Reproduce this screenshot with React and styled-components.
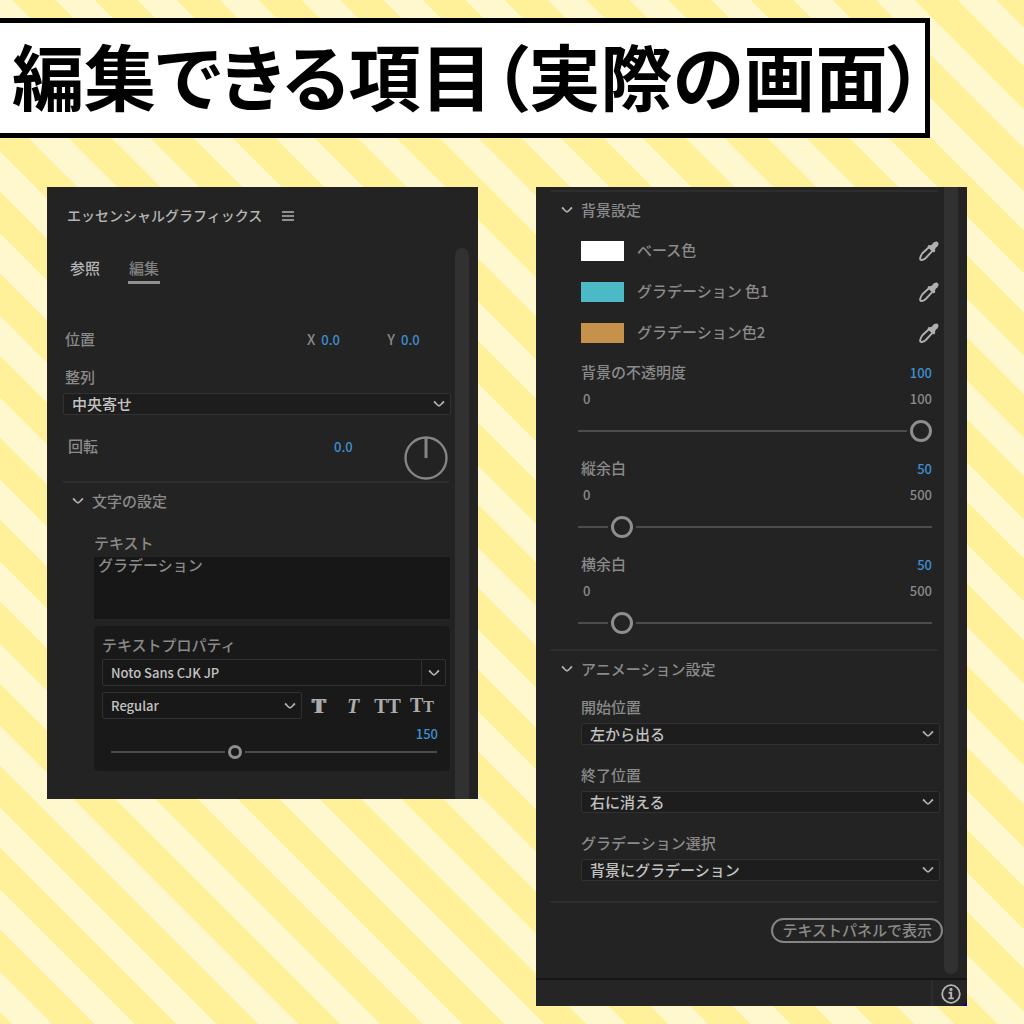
import React, { useState } from 'react'
import styled, { createGlobalStyle } from 'styled-components';

const GlobalStyle = createGlobalStyle`
  * {
    box-sizing: border-box;
  }
  body {
    margin: 0;
    font-family: "Noto Sans CJK JP", "Noto Sans", sans-serif;
    font-size: 15px;
    font-weight: 500;
    line-height: 20px;
  }
  button, input, select, textarea {
    margin: 0;
    padding: 0;
    border: none;
    border-radius: 0;
    background: none;
    color: inherit;
    font: inherit;
  }
`
const Page = styled.div`
  min-height: 100vh;
  padding: 18px 0 0;
  background: repeating-linear-gradient(
    45deg,
    #fff09a 0 9px,
    #fff8cf 9px 37px,
    #fff09a 37px 58px
  );
`
const Title = styled.h1`
  width: fit-content;
  margin: 0 0 49px;
  padding: 1px 2px 9px 12px;
  border: 5px solid #000;
  border-left: none;
  background: #fff;
  color: #000;
  font-size: 72px;
  font-weight: 700;
  line-height: 100px;
  white-space: nowrap;
  font-feature-settings: "palt";
`
const Panels = styled.main`
  display: grid;
  grid-template-columns: 1fr 1fr;
  align-items: start;
  gap: 58px;
  padding: 0 57px 0 47px;
`
const Panel = styled.section`
  display: flex;
  flex-direction: column;
  min-width: 0;
  background: #232323;
  color: #8a8a8a;
`
const PanelHead = styled.header`
  display: flex;
  align-items: center;
  gap: 20px;
  height: 61px;
  padding: 0 20px 5px;
  color: #b4b4b4;

  h2 {
    margin: 0;
    font-size: 14px;
    font-weight: 500;
  }
  button {
    display: flex;
    padding-top: 2px;
  }
`
const Body = styled.div`
  display: flex;
  padding-right: 9px;
`
const Content = styled.div`
  flex: 1;
  min-width: 0;
  padding: ${props => props.$pad};
`
const ScrollBar = styled.div`
  width: 14px;
  margin-bottom: ${props => props.$bottom || 0};
  border-radius: ${props => props.$round};
  background: #313131;
`
const Tabs = styled.nav`
  display: flex;
  gap: 27px;
  padding: 10px 6px 0;
  margin-bottom: 45px;
`
const Tab = styled.button`
  padding: 0 1px 3px;
  border-bottom: 3px solid ${props => props.$active ? '#929292' : 'transparent'};
  color: ${props => props.$active ? '#808080' : '#b4b4b4'};
`
const Row = styled.div`
  display: flex;
  align-items: flex-start;
  padding: ${props => props.$pad || 0};
`
const Name = styled.label`
  flex: 1;
`
const Axis = styled.label`
  display: flex;
  gap: 6px;
  margin-left: 46px;
  font-size: 14px;
`
const Value = styled.input`
  width: ${props => props.$width || '32px'};
  height: 20px;
  padding-top: 2px;
  color: #3f8fd2;
  font-size: 13px;
  text-align: ${props => props.$align || 'left'};
`
const Dial = styled.button`
  display: flex;
  margin-left: 50px;
`
const Line = styled.hr`
  height: 2px;
  margin: ${props => props.$margin};
  border: none;
  background: #2d2d2d;
`
const Toggle = styled.button`
  display: flex;
  align-items: center;
  gap: 8px;
`
const FieldLabel = styled.label`
  display: block;
  padding-left: ${props => props.$indent || 0};
`
const TextBox = styled.textarea`
  display: block;
  width: 100%;
  height: 62px;
  padding: 0 4px;
  margin: 4px 0 7px;
  background: #171717;
  line-height: 16px;
  resize: none;
`
const PropBox = styled.div`
  padding: 9px 4px 12px 8px;
  border-radius: 5px;
  background: #191919;
`
const FontRow = styled.div`
  display: grid;
  grid-template-columns: 200px 34px 34px 35px 34px;
  align-items: center;
  margin-top: 6px;
`
const SelectBox = styled.div`
  position: relative;
  margin-top: ${props => props.$top || 0};

  select {
    display: block;
    width: 100%;
    height: ${props => props.$tall ? '27px' : '22px'};
    padding: ${props => props.$tall ? '0 8px' : '0 8px 2px'};
    border: 1px solid #313131;
    border-radius: 2px;
    background: ${props => props.$tall ? '#181818' : '#1d1d1d'};
    color: #c2c2c2;
    font-size: ${props => props.$tall ? '13px' : '15px'};
    appearance: none;
  }
`
const Arrow = styled.span`
  position: absolute;
  top: 1px;
  right: 1px;
  bottom: 1px;
  display: flex;
  align-items: center;
  justify-content: center;
  width: 24px;
  border-left: 1px solid ${props => props.$split ? '#313131' : 'transparent'};
  pointer-events: none;
`
const StyleButton = styled.button`
  color: #acacac;
  font-family: "Liberation Serif", serif;
  font-size: 20px;
  font-weight: 700;
  font-style: ${props => props.$italic ? 'italic' : 'normal'};
  text-shadow: ${props => props.$heavy ? '1px 0 #acacac, -1px 0 #acacac' : 'none'};

  small {
    font-size: 16px;
  }
`
const Range = styled.input`
  --size: ${props => props.$small ? '14px' : '22px'};
  --back: ${props => props.$small ? '#191919' : '#232323'};
  display: block;
  width: 100%;
  height: var(--size);
  appearance: none;

  &::-webkit-slider-runnable-track {
    height: 2px;
    background: #4c4c4c;
  }
  &::-webkit-slider-thumb {
    appearance: none;
    width: var(--size);
    height: var(--size);
    margin-top: calc(1px - var(--size) / 2);
    border: 3px solid #8e8e8e;
    border-radius: 50%;
    background: var(--back);
    box-shadow: 0 0 0 3px var(--back);
  }
`
const ColorItem = styled.div`
  display: flex;
  align-items: center;
  height: 41px;
  padding-right: 4px;

  label {
    flex: 1;
    padding-bottom: 1px;
  }
  button {
    display: flex;
    color: #b0b0b0;
  }
`
const Swatch = styled.input`
  width: 43px;
  height: 20px;
  margin-right: 13px;

  &::-webkit-color-swatch-wrapper {
    padding: 0;
  }
  &::-webkit-color-swatch {
    border: none;
  }
`
const SliderItem = styled.div`
  margin: 0 11px 15px 0;
  padding-top: 1px;
`
const Limits = styled.div`
  display: flex;
  justify-content: space-between;
  margin: 7px 0 11px;
  padding-left: 2px;
  font-size: 13px;
`
const RangeWrap = styled.div`
  margin-left: -3px;
`
const MenuItem = styled.div`
  margin-bottom: 20px;
`
const PillButton = styled.button`
  display: block;
  height: 25px;
  margin-left: auto;
  padding: 0 9px 2px;
  border: 2px solid #858585;
  border-radius: 13px;
`
const Footer = styled.footer`
  background: #14007c;

  div {
    display: flex;
    justify-content: flex-end;
    height: 28px;
    border-top: 2px solid #161616;
    border-bottom-right-radius: 8px;
    background: #252525;
  }
  button {
    display: flex;
    align-items: center;
    padding: 2px 6px 0 8px;
    border-left: 2px solid #2d2d2d;
    color: #b4b4b4;
  }
`

const Chevron = () => (
  <svg width="12" height="8" viewBox="0 0 12 8" fill="none" stroke="#b0b0b0" strokeWidth="1.8">
    <path d="M1 1.5 C3 3 4 5.5 6 5.8 C8 5.5 9 3 11 1.5" />
  </svg>
)

const Dropper = () => (
  <svg width="20" height="20" viewBox="0 0 20 20">
    <path d="M10.2 6 L3.4 12.2 Q1.8 14.4 1.2 17 Q.8 19.2 2.8 19 Q5 18.6 6.8 17 L13.4 9.8" fill="none" stroke="currentColor" strokeWidth="1.9" />
    <path d="M9 4.6 Q10.2 3.4 11.6 4.2 L13 3.4 Q14.4 .6 17.2 .6 Q20 1 19.4 3.8 Q18.8 5.6 16.8 6.8 L16 8.4 Q16.8 10 15.4 11.2 Q14.2 11.6 13.2 10.6 L9.2 6.8 Q8.2 5.6 9 4.6 Z" fill="currentColor" />
  </svg>
)

const InfoIcon = () => (
  <svg width="20" height="20" viewBox="0 0 20 20" fill="none" stroke="currentColor">
    <circle cx="10" cy="10" r="8.8" strokeWidth="1.8" />
    <circle cx="10" cy="5.4" r="1.6" fill="currentColor" stroke="none" />
    <path d="M7.6 8.8 H10.2 V14.2 M7.4 14.4 H12.8" strokeWidth="1.9" />
  </svg>
)

const Select = ({ id, label, options, tall, split, top }) => (
  <SelectBox $tall={tall} $top={top}>
    <select id={id} aria-label={label}>
      {options.map(option => <option key={option}>{option}</option>)}
    </select>
    <Arrow $split={split}><Chevron /></Arrow>
  </SelectBox>
)

const colors = [
  { id: 'base', name: 'ベース色', value: '#ffffff' },
  { id: 'grad1', name: 'グラデーション 色1', value: '#4cb9c6' },
  { id: 'grad2', name: 'グラデーション色2', value: '#c6914a' },
]

const sliders = [
  { id: 'opacity', name: '背景の不透明度', value: 100, max: 100 },
  { id: 'padY', name: '縦余白', value: 50, max: 500 },
  { id: 'padX', name: '横余白', value: 50, max: 500 },
]

const menus = [
  { id: 'start', name: '開始位置', options: ['左から出る'] },
  { id: 'end', name: '終了位置', options: ['右に消える'] },
  { id: 'gradient', name: 'グラデーション選択', options: ['背景にグラデーション'] },
]

const Slider = ({ item }) => {
  const [value, setValue] = useState(item.value);

  return (
    <SliderItem>
      <Row>
        <Name htmlFor={item.id}>{item.name}</Name>
        <Value $align="right" aria-label={item.name} value={value} onChange={e => setValue(e.target.value)} />
      </Row>
      <Limits><span>0</span><span>{item.max}</span></Limits>
      <RangeWrap>
        <Range id={item.id} type="range" min="0" max={item.max} value={value} onChange={e => setValue(e.target.value)} />
      </RangeWrap>
    </SliderItem>
  )
}

const EditPanel = () => {
  const [size, setSize] = useState(150);

  return (
    <Panel>
      <PanelHead>
        <h2>エッセンシャルグラフィックス</h2>
        <button aria-label="menu">
          <svg width="12" height="10" viewBox="0 0 12 10" stroke="#b4b4b4" strokeWidth="1.6">
            <path d="M0 1 H12 M0 5 H12 M0 9 H12" />
          </svg>
        </button>
      </PanelHead>
      <Body>
        <Content $pad="0 4px 28px 16px">
          <Tabs>
            <Tab>参照</Tab>
            <Tab $active>編集</Tab>
          </Tabs>
          <Row $pad="0 0 18px 2px">
            <Name as="span">位置</Name>
            <Axis>X <Value defaultValue="0.0" $width="20px" /></Axis>
            <Axis>Y <Value defaultValue="0.0" $width="50px" /></Axis>
          </Row>
          <FieldLabel htmlFor="align" $indent="2px">整列</FieldLabel>
          <Select id="align" options={['中央寄せ']} top="6px" />
          <Row $pad="21px 3px 1px 5px">
            <Name htmlFor="rotation">回転</Name>
            <Value id="rotation" defaultValue="0.0" $width="20px" />
            <Dial aria-label="回転">
              <svg width="44" height="44" viewBox="0 0 44 44" fill="none" stroke="#858585">
                <circle cx="22" cy="22" r="20.5" strokeWidth="2.4" />
                <path d="M22 2 V22" strokeWidth="3" />
              </svg>
            </Dial>
          </Row>
          <Line $margin="0 2px 8px 0" />
          <Row $pad="0 0 22px 9px">
            <Toggle><Chevron />文字の設定</Toggle>
          </Row>
          <Content $pad="0 1px 0 31px">
            <FieldLabel htmlFor="text">テキスト</FieldLabel>
            <TextBox id="text" defaultValue="グラデーション" />
            <PropBox>
              <FieldLabel htmlFor="font">テキストプロパティ</FieldLabel>
              <Select id="font" options={['Noto Sans CJK JP']} tall split top="4px" />
              <FontRow>
                <Select id="weight" label="スタイル" options={['Regular']} tall />
                <StyleButton $heavy>T</StyleButton>
                <StyleButton $italic>T</StyleButton>
                <StyleButton>TT</StyleButton>
                <StyleButton>T<small>T</small></StyleButton>
              </FontRow>
              <Row $pad="4px 8px 2px 9px">
                <Name htmlFor="size" />
                <Value $align="right" aria-label="サイズ" value={size} onChange={e => setSize(e.target.value)} />
              </Row>
              <Row $pad="0 9px 0 9px">
                <Range id="size" $small aria-label="サイズ" type="range" min="0" max="400" value={size} onChange={e => setSize(e.target.value)} />
              </Row>
            </PropBox>
          </Content>
        </Content>
        <ScrollBar $round="7px 7px 0 0" />
      </Body>
    </Panel>
  )
}

const BackgroundPanel = () => {
  return (
    <Panel>
      <Body>
        <Content $pad="3px 1px 35px 14px">
          <Line $margin="0 5px 8px 0" />
          <Row $pad="0 0 10px 11px">
            <Toggle><Chevron />背景設定</Toggle>
          </Row>
          <Content $pad="0 0 0 31px">
            {colors.map(color =>
              <ColorItem key={color.id}>
                <Swatch id={color.id} type="color" defaultValue={color.value} />
                <label htmlFor={color.id}>{color.name}</label>
                <button aria-label={color.name}><Dropper /></button>
              </ColorItem>
            )}
          </Content>
          <Content $pad="8px 0 0 31px">
            {sliders.map(item => <Slider key={item.id} item={item} />)}
          </Content>
          <Line $margin="0 5px 8px 0" />
          <Row $pad="0 0 18px 11px">
            <Toggle><Chevron />アニメーション設定</Toggle>
          </Row>
          <Content $pad="0 3px 0 31px">
            {menus.map(menu =>
              <MenuItem key={menu.id}>
                <FieldLabel htmlFor={menu.id}>{menu.name}</FieldLabel>
                <Select id={menu.id} options={menu.options} top="6px" />
              </MenuItem>
            )}
          </Content>
          <Line $margin="0 5px 15px 0" />
          <PillButton>テキストパネルで表示</PillButton>
        </Content>
        <ScrollBar $round="0 0 7px 7px" $bottom="4px" />
      </Body>
      <Footer>
        <div>
          <button aria-label="info"><InfoIcon /></button>
        </div>
      </Footer>
    </Panel>
  )
}

const App = () => {
  return (
    <>
      <GlobalStyle />
      <Page>
        <Title>編集できる項目（実際の画面）</Title>
        <Panels>
          <EditPanel />
          <BackgroundPanel />
        </Panels>
      </Page>
    </>
  )
}

export default App;
